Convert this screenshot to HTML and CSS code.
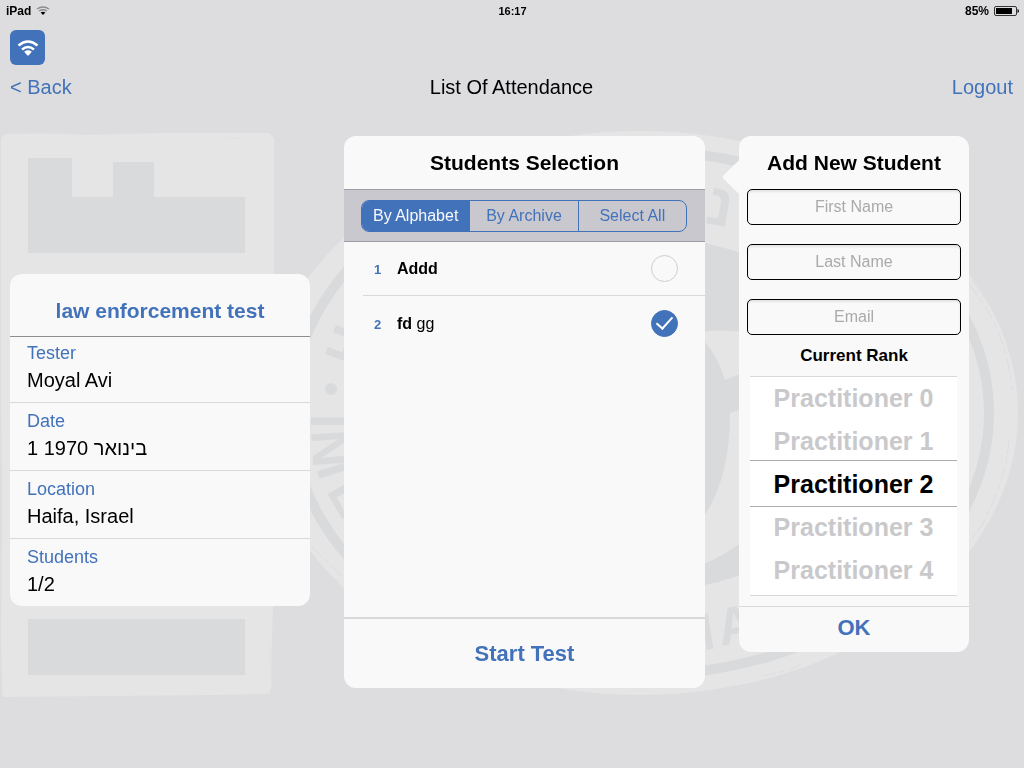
FILE: index.html
```html
<!DOCTYPE html>
<html lang="en">
<head>
    <meta charset="UTF-8">
    <meta name="viewport" content="width=device-width, initial-scale=1.0">
    <title>List Of Attendance</title>
    <link rel="stylesheet" href="styles.css">
</head>
<body>
    <!-- watermark emblem -->
    <svg class="watermark" viewBox="0 0 1024 768" preserveAspectRatio="xMidYMin slice" aria-hidden="true">
        <path fill="#e5e5e6" d="M1 138L5 134Q40 133 68 134L85 135Q120 134 160 133L269 133L274 138V300L273 600L272 640L271 688L269 694L215 695L3 697L2 690L1 640L2 500L1 400Z"/>
        <path fill="#d9dadc" d="M28 158H72V197H113V162H154V197H245V253H28ZM28 619H245V675H28Z"/>
        <path fill="none" stroke="#e1e1e2" d="M270 640Q270 670 272 688M226 138H242"/>
        <ellipse cx="640" cy="413" rx="378" ry="282" fill="#e5e5e6"/>
        <ellipse cx="640" cy="413" rx="349" ry="262" fill="none" stroke="#d9dadc" stroke-width="10"/>
        <path class="scratch" d="M969 284Q1007 330 1012 390M1009 440Q1006 480 982 525M972 280Q985 298 988 305M985 520Q978 532 969 542M310 553Q320 570 343 585M312 547Q325 560 344 578M762 676Q790 671 803 663"/>
        <ellipse cx="640" cy="414" rx="235" ry="178" fill="#d9dadc"/>
        <path fill="#e5e5e6" d="M700 332Q720 329 745 332V372L725 380Q718 357 705 342ZM745 408L730 413Q730 476 705 515L700 566Q725 555 745 540Z"/>
        <circle cx="331" cy="389" r="6" fill="#d9dadc"/>
        <g class="ring-text">
            <text transform="translate(337 322) rotate(110)">H</text>
            <text transform="translate(311 414) rotate(90)">I</text>
            <text transform="translate(311 431) rotate(86)">N</text>
            <text transform="translate(316 468) rotate(73)">I</text>
            <text transform="translate(326 491) rotate(60)">E</text>
            <text transform="translate(674 655) rotate(-9)">M</text>
            <text transform="translate(721 646) rotate(-12)">A</text>
        </g>
        <g class="ring-text hebrew">
            <text transform="translate(704 223) rotate(10)">נ</text>
            <text transform="translate(730 228) rotate(15)">י</text>
        </g>
    </svg>

    <div class="status-bar">
        <div class="status-left">
            <span>iPad</span>
            <svg width="14" height="10" viewBox="0 0 14 10" fill="none" aria-hidden="true">
                <path stroke="#8c8c8d" stroke-width="1.4" d="M1 3Q7 -1 13 3M3 5Q7 2.400 11 5"/>
                <path fill="#000" d="M4.600 6.500Q7 5 9.400 6.500L7 9Z"/>
            </svg>
        </div>
        <span>16:17</span>
        <div class="status-right">
            <span>85%</span>
            <svg width="25" height="10" viewBox="0 0 25 10" aria-hidden="true">
                <rect x="0.500" y="0.500" width="22" height="9" rx="1.500" fill="none" stroke="#333"/>
                <rect x="2" y="2" width="16" height="6" fill="#000"/>
                <path fill="#000" d="M23.500 3Q25 3.500 25 5T23.500 7Z"/>
            </svg>
        </div>
    </div>

    <button class="wifi-button" aria-label="Connection">
        <svg width="22" height="18" viewBox="0 0 22 18" fill="none" stroke="#fff" stroke-width="2.500" aria-hidden="true">
            <path d="M1.500 6.500Q11 -1.500 20.500 6.500M5 10.500Q11 5.500 17 10.500"/>
            <path fill="#fff" stroke="none" d="M7.200 12.700Q11 9.800 14.800 12.700L12 16Q11 17 10 16Z"/>
        </svg>
    </button>

    <nav class="nav-bar">
        <a href="#">&lt; Back</a>
        <h1>List Of Attendance</h1>
        <a href="#">Logout</a>
    </nav>

    <main class="columns">
        <section class="card info">
            <h2>law enforcement test</h2>
            <dl>
                <div><dt>Tester</dt><dd>Moyal Avi</dd></div>
                <div><dt>Date</dt><dd>1 1970 בינואר</dd></div>
                <div><dt>Location</dt><dd>Haifa, Israel</dd></div>
                <div><dt>Students</dt><dd>1/2</dd></div>
            </dl>
        </section>

        <section class="card selection">
            <h2>Students Selection</h2>
            <div class="filter">
                <div class="segments">
                    <button class="active">By Alphabet</button>
                    <button>By Archive</button>
                    <button>Select All</button>
                </div>
            </div>
            <ul class="students">
                <li>
                    <label for="student1"><span class="index">1</span><b>Addd</b></label>
                    <input type="checkbox" id="student1">
                </li>
                <li>
                    <label for="student2"><span class="index">2</span><b>fd</b> gg</label>
                    <input type="checkbox" id="student2" checked>
                </li>
            </ul>
            <button class="action start">Start Test</button>
        </section>

        <form class="card add-student">
            <h2>Add New Student</h2>
            <div class="fields">
                <input type="text" placeholder="First Name" aria-label="First Name">
                <input type="text" placeholder="Last Name" aria-label="Last Name">
                <input type="email" placeholder="Email" aria-label="Email">
            </div>
            <h3>Current Rank</h3>
            <div class="picker" role="radiogroup" aria-label="Current Rank">
                <label><input type="radio" name="rank"><span>Practitioner 0</span></label>
                <label><input type="radio" name="rank"><span>Practitioner 1</span></label>
                <label><input type="radio" name="rank" checked><span>Practitioner 2</span></label>
                <label><input type="radio" name="rank"><span>Practitioner 3</span></label>
                <label><input type="radio" name="rank"><span>Practitioner 4</span></label>
            </div>
            <button type="button" class="action ok">OK</button>
        </form>
    </main>
</body>
</html>
```
FILE: styles.css
```css
* {
    box-sizing: border-box;
}
body {
    margin: 0;
    min-height: 100vh;
    background-color: #dddddf;
    color: black;
    font-family: "Liberation Sans", Arial, sans-serif;
}
h1, h2, h3, dl, dd, ul {
    margin: 0;
    padding: 0;
}
button {
    border: none;
    padding: 0;
    background: none;
    color: #4272ba;
    font-family: inherit;
    cursor: pointer;
}
.watermark {
    position: fixed;
    top: 0;
    left: 0;
    width: 100%;
    height: 100%;
    z-index: -1;
}
.ring-text {
    fill: #d9dadc;
    font-family: "Liberation Sans Narrow", "Liberation Sans", sans-serif;
    font-size: 52px;
    font-weight: bold;
}
.hebrew {
    font-family: "Liberation Sans", sans-serif;
    font-size: 60px;
}
.scratch {
    fill: none;
    stroke: #dddddf;
    stroke-dasharray: 14 3 6 5;
}

/* top bars */
.status-bar {
    display: grid;
    grid-template-columns: 1fr auto 1fr;
    align-items: center;
    height: 22px;
    padding: 0 5px 0 6px;
    font-size: 11px;
    font-weight: bold;
}
.status-left, .status-right {
    display: flex;
    align-items: center;
    gap: 5px;
    font-size: 12px;
}
.status-right {
    justify-content: flex-end;
}
.wifi-button {
    display: flex;
    justify-content: center;
    align-items: center;
    width: 35px;
    height: 35px;
    margin: 8px 0 0 10px;
    border-radius: 6px;
    background-color: #4272ba;
}
.nav-bar {
    display: grid;
    grid-template-columns: 1fr auto 1fr;
    align-items: center;
    height: 44px;
    padding: 0 11px 0 10px;
    font-size: 20px;
}
.nav-bar h1 {
    font-size: 20px;
    font-weight: normal;
}
.nav-bar a {
    color: #4272ba;
    text-decoration: none;
}
.nav-bar a:last-child {
    text-align: right;
}

/* cards */
.columns {
    display: grid;
    grid-template-columns: 300fr 361fr 230fr;
    align-items: start;
    gap: 34px;
    padding: 27px 55px 27px 10px;
}
.card {
    border-radius: 12px;
    background-color: #f9f9f9;
}
.card h2 {
    height: 53px;
    line-height: 53px;
    font-size: 21px;
    text-align: center;
}
.action {
    display: block;
    width: 100%;
    font-size: 22px;
    font-weight: bold;
}

.info {
    margin-top: 138px;
}
.info h2 {
    height: 63px;
    padding-top: 10px;
    border-bottom: 1px solid #8e8e8e;
    color: #4272ba;
}
.info dl div {
    padding: 6px 17px 7px;
    border-bottom: 1px solid #d9d9da;
}
.info dl div:first-child {
    padding-top: 4px;
}
.info dl div:last-child {
    border-bottom: none;
}
.info dt {
    color: #4272ba;
    font-size: 18px;
    line-height: 24px;
}
.info dd {
    font-size: 20px;
    line-height: 30px;
}

.filter {
    padding: 10px 18px 9px 17px;
    border-top: 1px solid #9d9da3;
    border-bottom: 1px solid #9d9da3;
    background-color: #c8c8ce;
}
.segments {
    display: flex;
    height: 32px;
    border: 1px solid #4272ba;
    border-radius: 8px;
    overflow: hidden;
}
.segments button {
    flex: 1;
    font-size: 16px;
}
.segments button + button {
    border-left: 1px solid #4272ba;
}
.segments .active {
    background-color: #4272ba;
    color: #f9f9f9;
}
.students {
    min-height: 375px;
    padding-left: 19px;
    list-style: none;
}
.students li {
    display: flex;
    justify-content: space-between;
    align-items: center;
    height: 54px;
    padding: 0 27px 0 11px;
    font-size: 16px;
    line-height: 20px;
}
.students li:not(:last-child) {
    border-bottom: 1px solid #d9d9da;
}
.students label {
    padding-top: 2px;
}
.index {
    display: inline-block;
    width: 23px;
    color: #4272ba;
    font-size: 13px;
    font-weight: bold;
}
.students input {
    appearance: none;
    display: flex;
    justify-content: center;
    align-items: center;
    width: 27px;
    height: 27px;
    margin: 0;
    border: 1px solid #cdcdcd;
    border-radius: 50%;
}
.students input:checked {
    border-color: #4272ba;
    background-color: #4272ba;
}
/* the tick is two sides of a turned box */
.students input:checked::after {
    content: "";
    width: 7px;
    height: 14px;
    margin-bottom: 4px;
    border: solid white;
    border-width: 0 2px 2px 0;
    transform: rotate(42deg);
}
.start {
    height: 71px;
    border-top: 2px solid #d9d9da;
}

.add-student {
    position: relative;
}
/* arrow that points at the selection card */
.add-student::before {
    content: "";
    position: absolute;
    top: 29px;
    left: -12px;
    width: 24px;
    height: 24px;
    border-radius: 2px;
    background-color: #f9f9f9;
    transform: rotate(45deg);
}
.add-student h2 {
    position: relative;
}
.fields {
    position: relative;
    display: flex;
    flex-direction: column;
    gap: 19px;
    padding: 0 8px;
}
.fields input {
    width: 100%;
    height: 36px;
    border: 1px solid black;
    border-radius: 5px;
    background-color: #f9f9f9;
    box-shadow: inset 0 2px 2px #e4e4e4;
    font-family: inherit;
    font-size: 16px;
    text-align: center;
}
.fields input::placeholder {
    color: #aaaaab;
}
.add-student h3 {
    height: 41px;
    line-height: 41px;
    font-size: 17px;
    text-align: center;
}
.picker {
    margin: 0 12px 10px 11px;
    padding-bottom: 3px;
    border-top: 1px solid #d9d9da;
    border-bottom: 1px solid #d9d9da;
    background-color: white;
}
.picker label {
    display: block;
    position: relative;
    height: 43px;
    line-height: 43px;
    color: #c9c9cb;
    font-size: 25px;
    font-weight: bold;
    text-align: center;
}
.picker input {
    appearance: none;
    position: absolute;
    top: -3px;
    bottom: -1px;
    left: 0;
    right: 0;
    margin: 0;
}
.picker input:checked {
    border-top: 1px solid #acaca9;
    border-bottom: 1px solid #acaca9;
}
.picker input:checked + span {
    color: black;
}
.ok {
    height: 46px;
    padding-bottom: 4px;
    border-top: 1px solid #d9d9da;
}
```
